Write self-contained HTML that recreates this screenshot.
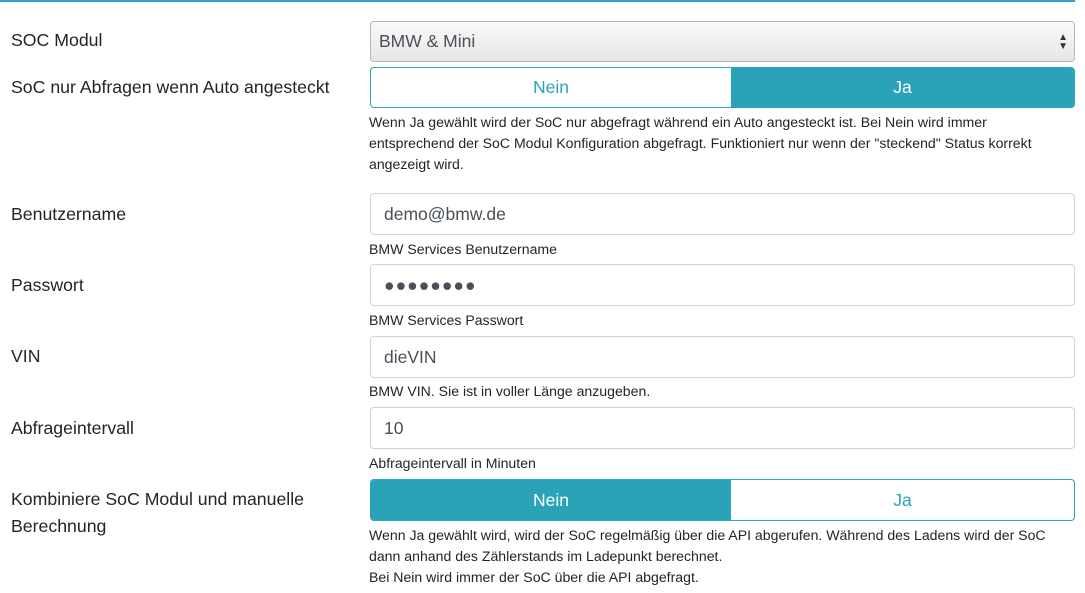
<!DOCTYPE html>
<html><head><meta charset="utf-8"><style>
body{margin:0;width:1085px;height:593px;background:#fff;font-family:"Liberation Sans",sans-serif;color:#212529;position:relative;overflow:hidden}
.line{position:absolute;left:0;top:0;width:1075px;height:2px;background:#3a9bc4}
.lbl{position:absolute;left:11px;font-size:17.7px;line-height:27px}
.ctl{position:absolute;left:370px;width:705px;box-sizing:border-box;border:1px solid #ced4da;border-radius:4px;font-size:17.5px;color:#495057;padding-left:13px;display:flex;align-items:center}
.sel{background:linear-gradient(#fafafa,#e6e6e6);border-color:#aab8c8;padding-left:8px}
.tg{position:absolute;left:370px;width:705px;display:flex;border:1px solid #2aa3b8;border-radius:4px;box-sizing:border-box;overflow:hidden;font-size:17.5px}
.tg div{display:flex;align-items:center;justify-content:center;color:#2aa3b8}
.tg div:first-child{width:360px}
.tg div:last-child{flex:1}
.tg .on{background:#2aa3b8;color:#fff}
.help{position:absolute;left:369px;font-size:14.1px;line-height:21px;width:690px}
</style></head><body>
<div class="line"></div>
<div class="lbl" style="top:27px">SOC Modul</div>
<div class="ctl sel" style="top:21px;height:41px">BMW &amp; Mini<span style="position:absolute;right:6px;font-size:10px;line-height:9px;color:#333">▲<br>▼</span></div>
<div class="lbl" style="top:74px">SoC nur Abfragen wenn Auto angesteckt</div>
<div class="tg" style="top:67px;height:41px"><div>Nein</div><div class="on">Ja</div></div>
<div class="help" style="top:112px">Wenn Ja gewählt wird der SoC nur abgefragt während ein Auto angesteckt ist. Bei Nein wird immer entsprechend der SoC Modul Konfiguration abgefragt. Funktioniert nur wenn der "steckend" Status korrekt angezeigt wird.</div>
<div class="lbl" style="top:201px">Benutzername</div>
<div class="ctl" style="top:193px;height:42px">demo@bmw.de</div>
<div class="help" style="top:239px">BMW Services Benutzername</div>
<div class="lbl" style="top:272px">Passwort</div>
<div class="ctl" style="top:264px;height:42px;letter-spacing:1px">●●●●●●●●</div>
<div class="help" style="top:310px">BMW Services Passwort</div>
<div class="lbl" style="top:343px">VIN</div>
<div class="ctl" style="top:336px;height:42px">dieVIN</div>
<div class="help" style="top:381px">BMW VIN. Sie ist in voller Länge anzugeben.</div>
<div class="lbl" style="top:415px">Abfrageintervall</div>
<div class="ctl" style="top:407px;height:42px">10</div>
<div class="help" style="top:453px">Abfrageintervall in Minuten</div>
<div class="lbl" style="top:486px">Kombiniere SoC Modul und manuelle<br>Berechnung</div>
<div class="tg" style="top:479px;height:42px"><div class="on">Nein</div><div>Ja</div></div>
<div class="help" style="top:525px;width:706px">Wenn Ja gewählt wird, wird der SoC regelmäßig über die API abgerufen. Während des Ladens wird der SoC dann anhand des Zählerstands im Ladepunkt berechnet.<br>Bei Nein wird immer der SoC über die API abgefragt.</div>
</body></html>
